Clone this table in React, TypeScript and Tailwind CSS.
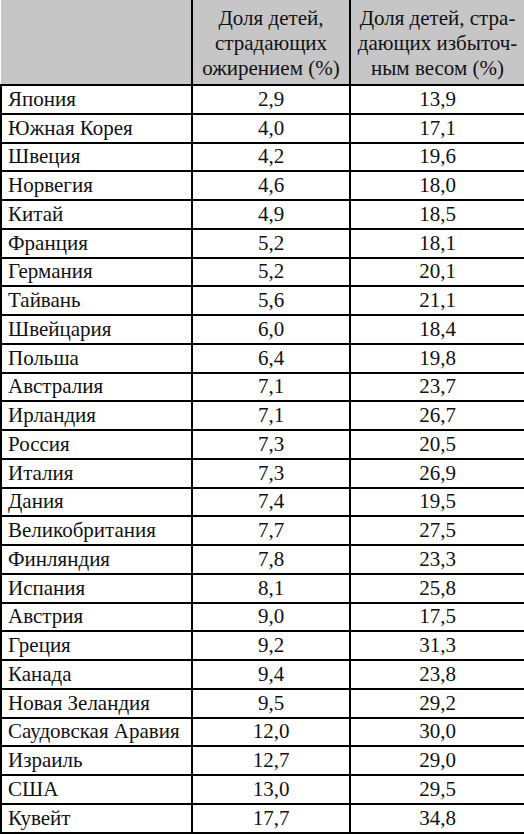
const rows: [string, string, string][] = [
  ["Япония", "2,9", "13,9"],
  ["Южная Корея", "4,0", "17,1"],
  ["Швеция", "4,2", "19,6"],
  ["Норвегия", "4,6", "18,0"],
  ["Китай", "4,9", "18,5"],
  ["Франция", "5,2", "18,1"],
  ["Германия", "5,2", "20,1"],
  ["Тайвань", "5,6", "21,1"],
  ["Швейцария", "6,0", "18,4"],
  ["Польша", "6,4", "19,8"],
  ["Австралия", "7,1", "23,7"],
  ["Ирландия", "7,1", "26,7"],
  ["Россия", "7,3", "20,5"],
  ["Италия", "7,3", "26,9"],
  ["Дания", "7,4", "19,5"],
  ["Великобритания", "7,7", "27,5"],
  ["Финляндия", "7,8", "23,3"],
  ["Испания", "8,1", "25,8"],
  ["Австрия", "9,0", "17,5"],
  ["Греция", "9,2", "31,3"],
  ["Канада", "9,4", "23,8"],
  ["Новая Зеландия", "9,5", "29,2"],
  ["Саудовская Аравия", "12,0", "30,0"],
  ["Израиль", "12,7", "29,0"],
  ["США", "13,0", "29,5"],
  ["Кувейт", "17,7", "34,8"],
];

// шапка и ячейки таблицы
const cell = "border-2 border-black font-[Liberation_Serif,serif]";

export default function App() {
  return (
    <div className="w-[524px] h-[834px] bg-white text-[#111] overflow-hidden">
      <table className="w-[524px] border-collapse table-fixed">
        <colgroup>
          <col className="w-[191px]" />
          <col className="w-[158px]" />
          <col className="w-[175px]" />
        </colgroup>
        <thead>
          <tr className="h-[85px] bg-[#c6c6c6] text-[21px] leading-[25px]">
            <th className="border-r-2 border-b-2 border-black"></th>
            <th className={`${cell} border-t-0 border-l-0 font-normal text-center align-middle px-0 pt-0.5 whitespace-nowrap`}>
              Доля детей,
              <br />
              страдающих
              <br />
              ожирением (%)
            </th>
            <th className={`${cell} border-t-0 font-normal text-center align-middle px-0 pt-0.5 whitespace-nowrap`}>
              Доля детей, стра-
              <br />
              дающих избыточ-
              <br />
              ным весом (%)
            </th>
          </tr>
        </thead>
        <tbody className="text-[21px]">
          {rows.map(([name, a, b]) => (
            <tr key={name} className="h-[28.75px]">
              <td className={`${cell} pl-1.5 whitespace-nowrap leading-none`}>{name}</td>
              <td className={`${cell} text-center leading-none`}>{a}</td>
              <td className={`${cell} text-center leading-none`}>{b}</td>
            </tr>
          ))}
        </tbody>
      </table>
    </div>
  );
}
